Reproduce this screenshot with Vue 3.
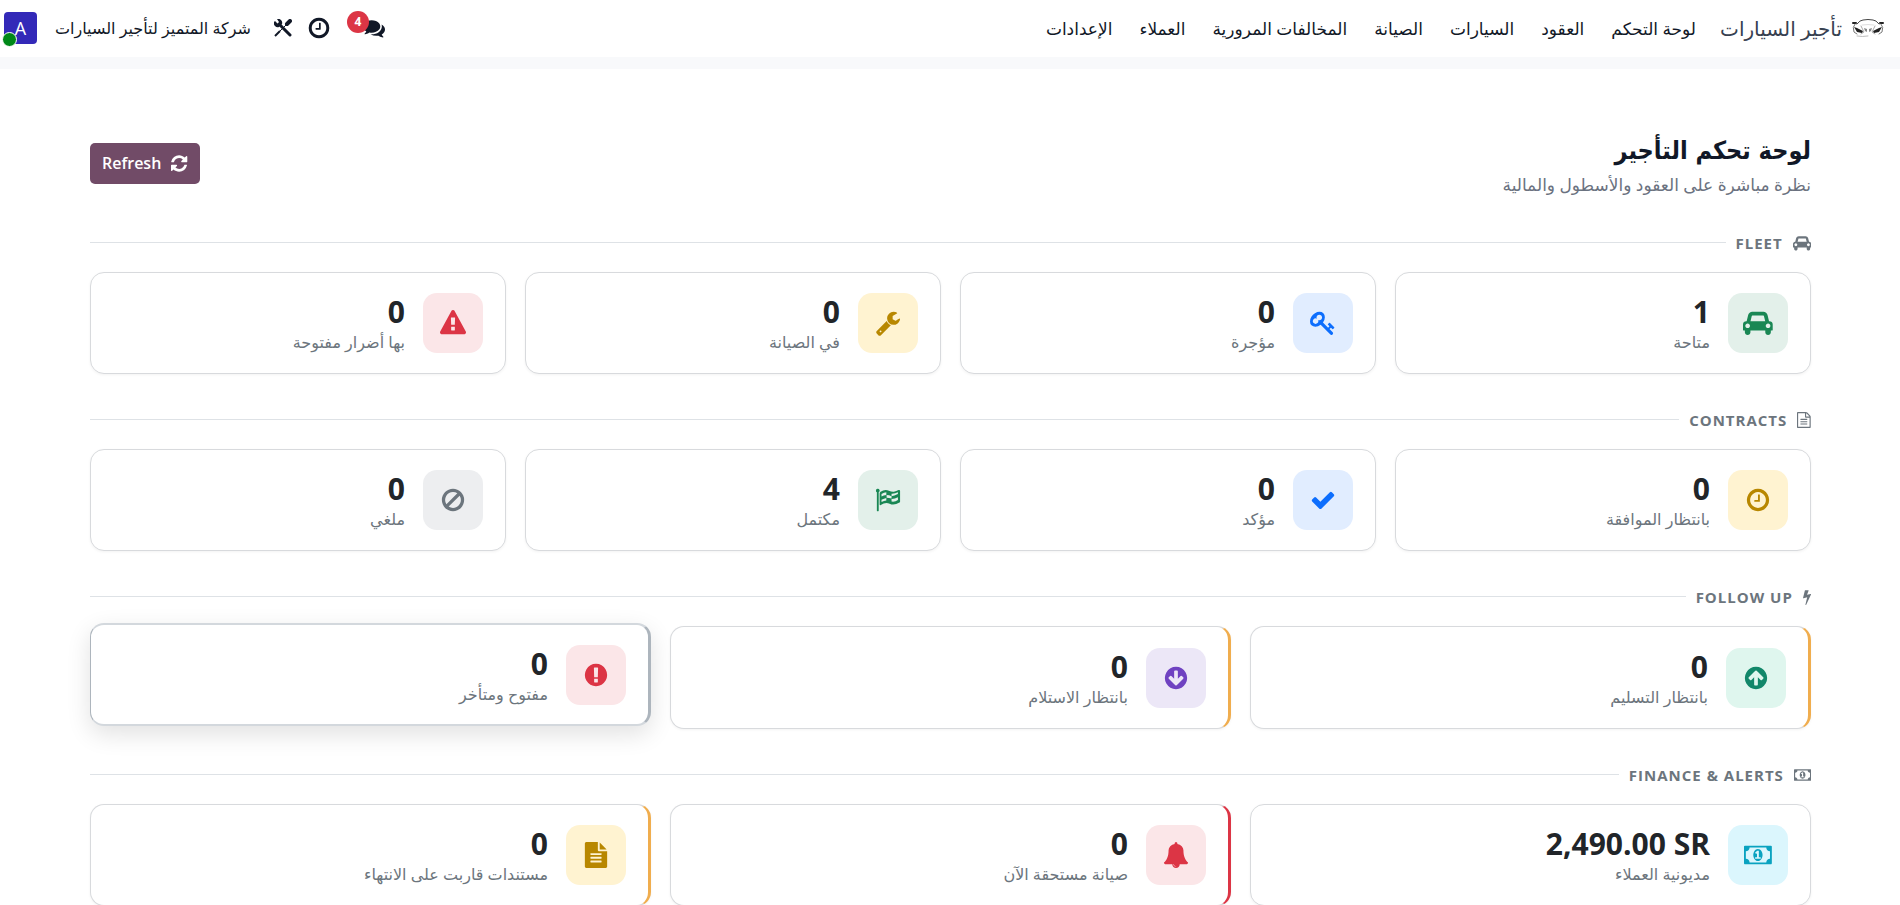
<script setup>
const navItems = ['لوحة التحكم', 'العقود', 'السيارات', 'الصيانة', 'المخالفات المرورية', 'العملاء', 'الإعدادات']

const circle = 'M896 128q209 0 385.5 103t279.5 279.5 103 385.5-103 385.5-279.5 279.5-385.5 103-385.5-103-279.5-279.5-103-385.5 103-385.5 279.5-279.5 385.5-103z'
const arrow = 'M1412 895q0-27-18-45l-362-362-91-91q-18-18-45-18t-45 18l-91 91-362 362q-18 18-18 45t18 45l91 91q18 18 45 18t45-18l189-189v502q0 26 19 45t45 19h128q26 0 45-19t19-45v-502l189 189q19 19 45 19t45-19l91-91q18-18 18-45z'

const icons = {
  car: { w: 2048, d: 'M480 1088q0-66-47-113t-113-47-113 47-47 113 47 113 113 47 113-47 47-113zm36-320h1016l-89-357q-2-8-14-17.5t-21-9.5h-768q-9 0-21 9.5t-14 17.5zm1372 320q0-66-47-113t-113-47-113 47-47 113 47 113 113 47 113-47 47-113zm160-96v384q0 14-9 23t-23 9h-96v128q0 80-56 136t-136 56-136-56-56-136v-128h-1024v128q0 80-56 136t-136 56-136-56-56-136v-128h-96q-14 0-23-9t-9-23v-384q0-93 65.5-158.5t158.5-65.5h28l105-419q23-94 104-157.5t179-63.5h768q98 0 179 63.5t104 157.5l105 419h28q93 0 158.5 65.5t65.5 158.5z' },
  key: { w: 1792, d: 'M832 512q0-80-56-136t-136-56-136 56-56 136q0 42 19 83-41-19-83-19-80 0-136 56t-56 136 56 136 136 56 136-56 56-136q0-42-19-83 41 19 83 19 80 0 136-56t56-136zm851 704q0 17-49 66t-66 49q-9 0-28.5-16t-36.5-33-38.5-40-24.5-26l-96 96 220 220q28 28 28 68 0 42-39 81t-81 39q-40 0-68-28l-671-671q-176 131-365 131-163 0-265.5-102.5t-102.5-265.5q0-160 95-313t248-248 313-95q163 0 265.5 102.5t102.5 265.5q0 189-131 365l355 355 96-96q-3-3-26-24.5t-40-38.5-33-36.5-16-28.5q0-17 49-66t66-49q13 0 23 10 6 6 46 44.5t82 79.5 86.5 86 73 78 28.5 41z' },
  wrench: { w: 1792, d: 'M448 1472q0-26-19-45t-45-19-45 19-19 45 19 45 45 19 45-19 19-45zm644-420l-682 682q-37 37-90 37-52 0-91-37l-106-108q-38-36-38-90 0-53 38-91l681-681q39 98 114.5 173.5t173.5 114.5zm634-435q0 39-23 106-47 134-164.5 217.5t-258.5 83.5q-185 0-316.5-131.5t-131.5-316.5 131.5-316.5 316.5-131.5q58 0 121.5 16.5t107.5 46.5q16 11 16 28t-16 28l-293 169v224l193 107q5-3 79-48.5t135.5-81 70.5-35.5q15 0 23.5 10t8.5 25z' },
  warning: { w: 1792, d: 'M1024 1375v-190q0-14-9.5-23.5t-22.5-9.5h-192q-13 0-22.5 9.5t-9.5 23.5v190q0 14 9.5 23.5t22.5 9.5h192q13 0 22.5-9.5t9.5-23.5zm-2-374l18-459q0-12-10-19-13-11-24-11h-220q-11 0-24 11-10 7-10 21l17 457q0 10 10 16.5t24 6.5h185q14 0 23.5-6.5t10.5-16.5zm-14-934l768 1408q35 63-2 126-17 29-46.5 46t-63.5 17h-1536q-34 0-63.5-17t-46.5-46q-37-63-2-126l768-1408q17-31 47-49t65-18 65 18 47 49z' },
  clock: { w: 1792, d: 'M1024 544v448q0 14-9 23t-23 9h-320q-14 0-23-9t-9-23v-64q0-14 9-23t23-9h224v-352q0-14 9-23t23-9h64q14 0 23 9t9 23zm416 352q0-148-73-273t-198-198-273-73-273 73-198 198-73 273 73 273 198 198 273 73 273-73 198-198 73-273zm224 0q0 209-103 385.5t-279.5 279.5-385.5 103-385.5-103-279.5-279.5-103-385.5 103-385.5 279.5-279.5 385.5-103 385.5 103 279.5 279.5 103 385.5z' },
  check: { w: 1792, d: 'M1671 566q0 40-28 68l-724 724-136 136q-28 28-68 28t-68-28l-136-136-362-362q-28-28-28-68t28-68l136-136q28-28 68-28t68 28l294 295 656-657q28-28 68-28t68 28l136 136q28 28 28 68z' },
  flag: { w: 1792, d: 'M64 256a128 128 0 1 1 192 110v1266q0 32-32 32h-64q-32 0-32-32V366q-64-40-64-110zM384 330Q680 120 960 260Q1140 350 1300 330Q1480 300 1620 215Q1728 170 1728 270V1010Q1728 1050 1690 1075Q1300 1300 1010 1150Q720 1020 400 1235Q320 1280 320 1200V440Q320 370 384 330zM448 480V660Q600 570 780 550V370Q620 390 448 480zM800 550V740Q960 740 1140 800V630Q980 560 800 550zM1140 630Q1320 630 1580 490V370Q1380 470 1140 460zM448 880V1040Q620 950 780 930V750Q620 780 448 880zM1140 820V1000Q1380 1040 1580 900V700Q1380 820 1140 820z' },
  ban: { w: 1792, d: 'M1440 893q0-161-87-295l-754 753q137 89 297 89 111 0 211.5-43.5t173.5-116.5 116-174.5 43-212.5zm-999 299l755-754q-135-91-300-91-148 0-273 73t-198 199-73 274q0 162 89 299zm1223-299q0 157-61 300t-163.5 246-245 164-298.5 61-298.5-61-245-164-163.5-246-61-300 61-299.5 163.5-245.5 245-164 298.5-61 298.5 61 245 164 163.5 245.5 61 299.5z' },
  up: { w: 1792, d: arrow + circle },
  down: { w: 1792, d: arrow + circle, flip: true },
  alert: { w: 1792, d: circle + 'm128 1247v-190q0-14-9-23.5t-22-9.5h-192q-13 0-23 10t-10 23v190q0 13 10 23t23 10h192q13 0 22-9.5t9-23.5zm-2-344l18-621q0-12-10-18-10-8-24-8h-220q-14 0-24 8-10 6-10 18l17 621q0 10 10 17.5t24 7.5h185q14 0 23.5-7.5t10.5-17.5z' },
  money: { w: 1920, d: 'M768 1152h384v-96h-128v-448h-114l-148 137 77 80q42-37 55-57h2v288h-128v96zm512-256q0 70-21 142t-59.5 134-101.5 101-138 39-138-39-101.5-101-59.5-134-21-142 21-142 59.5-134 101.5-101 138-39 138 39 101.5 101 59.5 134 21 142zm512 256v-512q-106 0-181-75t-75-181h-1152q0 106-75 181t-181 75v512q106 0 181 75t75 181h1152q0-106 75-181t181-75zm128-832v1152q0 26-19 45t-45 19h-1792q-26 0-45-19t-19-45v-1152q0-26 19-45t45-19h1792q26 0 45 19t19 45z' },
  bell: { w: 1792, d: 'M912 1696q0-16-16-16-59 0-101.5-42.5t-42.5-101.5q0-16-16-16t-16 16q0 73 51.5 124.5t124.5 51.5q16 0 16-16zm816-288q0 52-38 90t-90 38h-448q0 106-75 181t-181 75-181-75-75-181h-448q-52 0-90-38t-38-90q50-42 91-88t85-119.5 74.5-158.5 50-206 19.5-260q0-152 117-282.5t307-158.5q-8-19-8-39 0-40 28-68t68-28 68 28 28 68q0 20-8 39 190 28 307 158.5t117 282.5q0 139 19.5 260t50 206 74.5 158.5 85 119.5 91 88z' },
  file: { w: 1792, d: 'M1596 476q14 14 28 36h-472v-472q22 14 36 28zm-476 164h544v1056q0 40-28 68t-68 28h-1344q-40 0-68-28t-28-68v-1600q0-40 28-68t68-28h800v544q0 40 28 68t68 28zm160 736v-64q0-14-9-23t-23-9h-704q-14 0-23 9t-9 23v64q0 14 9 23t23 9h704q14 0 23-9t9-23zm0-256v-64q0-14-9-23t-23-9h-704q-14 0-23 9t-9 23v64q0 14 9 23t23 9h704q14 0 23-9t9-23zm0-256v-64q0-14-9-23t-23-9h-704q-14 0-23 9t-9 23v64q0 14 9 23t23 9h704q14 0 23-9t9-23z' },
  fileOutline: { w: 1792, crop: [128, 1536], d: 'M1596 380q28 28 48 76t20 88v1152q0 40-28 68t-68 28h-1344q-40 0-68-28t-28-68v-1600q0-40 28-68t68-28h896q40 0 88 20t76 48zm-444-244v376h376q-10-29-22-41l-313-313q-12-12-41-22zm384 1528v-1024h-416q-40 0-68-28t-28-68v-416h-768v1536h1280zm-1024-864q0-14 9-23t23-9h704q14 0 23 9t9 23v64q0 14-9 23t-23 9h-704q-14 0-23-9t-9-23v-64zm736 224q14 0 23 9t9 23v64q0 14-9 23t-23 9h-704q-14 0-23-9t-9-23v-64q0-14 9-23t23-9h704zm0 256q14 0 23 9t9 23v64q0 14-9 23t-23 9h-704q-14 0-23-9t-9-23v-64q0-14 9-23t23-9h704z' },
  bolt: { w: 1792, crop: [440, 912], d: 'M1333 566q18 20 7 44l-540 1157q-13 25-42 25-4 0-14-2-17-5-25.5-19t-4.5-30l197-808-406 101q-4 1-12 1-18 0-31-11-18-15-13-39l201-825q4-14 16-23t28-9h328q19 0 32 12.5t13 29.5q0 8-5 18l-171 463 396-98q8-2 12-2 19 0 34 15z' },
  refresh: { w: 1792, crop: [128, 1536], d: 'M1639 1056q0 5-1 7-64 268-268 434.5t-478 166.5q-146 0-282.5-55t-243.5-157l-129 129q-19 19-45 19t-45-19-19-45v-448q0-26 19-45t45-19h448q26 0 45 19t19 45-19 45l-137 137q71 66 161 102t187 36q134 0 250-65t186-179q11-17 53-117 8-23 30-23h192q13 0 22.5 9.5t9.5 22.5zm25-800v448q0 26-19 45t-45 19h-448q-26 0-45-19t-19-45 19-45l138-138q-148-137-349-137-134 0-250 65t-186 179q-11 17-53 117-8 23-30 23h-199q-13 0-22.5-9.5t-9.5-22.5v-7q65-268 270-434.5t480-166.5q146 0 284 55.5t245 156.5l130-129q19-19 45-19t45 19 19 45z' },
  comments: { w: 1792, d: 'M1408 768q0 139-94 257t-256.5 186.5-353.5 68.5q-86 0-176-16-124 88-278 128-36 9-86 16h-3q-11 0-20.5-8t-11.5-21q-1-3-1-6.5t.5-6.5 2-6l2.5-5 3.5-5.5 4-5 4.5-5 4-4.5q5-6 23-25t26-29.5 22.5-29 25-38.5 20.5-44q-124-72-195-177t-71-224q0-139 94-257t256.5-186.5 353.5-68.5 353.5 68.5 256.5 186.5 94 257zm384 256q0 120-71 224.5t-195 176.5q10 24 20.5 44t25 38.5 22.5 29 26 29.5 23 25q1 1 4 4.5t4.5 5 4 5 3.5 5.5l2.5 5 2 6 .5 6.5-1 6.5q-3 14-13 22t-22 7q-50-7-86-16-154-40-278-128-90 16-176 16-271 0-472-132 58 4 88 4 161 0 309-45t264-129q125-92 192-212t67-254q0-77-23-152 129 71 204 178t75 230z' },
}

function box(name) {
  const icon = icons[name]
  const [x, w] = icon.crop ?? [0, icon.w]
  return `${x} 0 ${w} 1792`
}

const sections = [
  {
    title: 'FLEET', icon: 'car', columns: 4,
    cards: [
      { value: '1', label: 'متاحة', icon: 'car', tone: 'green' },
      { value: '0', label: 'مؤجرة', icon: 'key', tone: 'blue' },
      { value: '0', label: 'في الصيانة', icon: 'wrench', tone: 'yellow' },
      { value: '0', label: 'بها أضرار مفتوحة', icon: 'warning', tone: 'red' },
    ],
  },
  {
    title: 'CONTRACTS', icon: 'fileOutline', columns: 4,
    cards: [
      { value: '0', label: 'بانتظار الموافقة', icon: 'clock', tone: 'yellow' },
      { value: '0', label: 'مؤكد', icon: 'check', tone: 'blue' },
      { value: '4', label: 'مكتمل', icon: 'flag', tone: 'green' },
      { value: '0', label: 'ملغي', icon: 'ban', tone: 'gray' },
    ],
  },
  {
    title: 'FOLLOW UP', icon: 'bolt', columns: 3,
    cards: [
      { value: '0', label: 'بانتظار التسليم', icon: 'up', tone: 'teal', edge: 'edge-orange' },
      { value: '0', label: 'بانتظار الاستلام', icon: 'down', tone: 'purple', edge: 'edge-orange' },
      { value: '0', label: 'مفتوح ومتأخر', icon: 'alert', tone: 'red', edge: 'raised' },
    ],
  },
  {
    title: 'FINANCE & ALERTS', icon: 'money', columns: 3,
    cards: [
      { value: '2,490.00 SR', label: 'مديونية العملاء', icon: 'money', tone: 'cyan' },
      { value: '0', label: 'صيانة مستحقة الآن', icon: 'bell', tone: 'red', edge: 'edge-red' },
      { value: '0', label: 'مستندات قاربت على الانتهاء', icon: 'file', tone: 'yellow', edge: 'edge-orange' },
    ],
  },
]
</script>

<template>
  <div class="app" dir="rtl" lang="ar">
    <header class="navbar">
      <a class="brand" href="#">
        <svg class="brand-logo" viewBox="0 0 32 18" aria-hidden="true">
          <g fill="none" stroke-linecap="round">
            <path d="M5 5Q8 1 11 1Q16 0 21 1Q24 1 27 5" stroke="#444" />
            <path d="M10 6Q16 5 22 6" stroke="#ddd" />
            <path d="M1 4h3M31 4h-3" stroke="#222" stroke-width="2" />
            <path d="M3 5Q0 8 2 13L5 15M29 5Q32 8 30 13L27 15" stroke="#777" />
            <path d="M9 7L12 13L9 15M23 7L20 13L23 15" stroke="#aaa" />
            <path d="M5 17Q10 18 16 17" stroke="#bbb" />
          </g>
          <path d="M2 8L5 9L11 12L10 14L5 13zM30 8L27 9L21 12L22 14L27 13z" fill="#222" />
          <path d="M12 9L15 10V13L13 12zM20 9L17 10V13L19 12z" fill="#888" />
        </svg>
        <span>تأجير السيارات</span>
      </a>
      <nav class="menu">
        <a v-for="item in navItems" :key="item" href="#">{{ item }}</a>
      </nav>
      <div class="tray">
        <button class="tray-button messages" type="button" aria-label="الرسائل">
          <svg class="icon comments" :viewBox="box('comments')"><path :d="icons.comments.d" /></svg>
          <span class="badge">4</span>
        </button>
        <button class="tray-button" type="button" aria-label="الأنشطة">
          <svg class="icon clock" :viewBox="box('clock')"><path :d="icons.clock.d" /></svg>
        </button>
        <button class="tray-button" type="button" aria-label="الأدوات">
          <svg class="tools" viewBox="0 0 18 18">
            <path d="M5 5L16 16" stroke-width="3" stroke-linecap="round" />
            <path d="M1 2L4 5L5 3L3 0A4 4 0 0 1 8 5L5 8A4 4 0 0 1 0 3z" fill="currentColor" stroke="none" />
            <path d="M16 2L13 5" stroke-width="4" stroke-linecap="round" />
            <path d="M12 6L3 15" stroke-width="1" />
            <path d="M6 12L1 17" stroke-width="2" />
          </svg>
        </button>
        <button class="tray-button company" type="button">شركة المتميز لتأجير السيارات</button>
        <button class="tray-button avatar" type="button" aria-label="الحساب">A<span class="status"></span></button>
      </div>
    </header>

    <main class="dashboard">
      <div class="page-head">
        <div>
          <h1>لوحة تحكم التأجير</h1>
          <p>نظرة مباشرة على العقود والأسطول والمالية</p>
        </div>
        <button class="refresh" type="button">
          <svg class="icon" :viewBox="box('refresh')"><path :d="icons.refresh.d" /></svg>
          <span>Refresh</span>
        </button>
      </div>

      <section v-for="section in sections" :key="section.title" class="section">
        <h2>
          <svg class="icon" :viewBox="box(section.icon)"><path :d="icons[section.icon].d" /></svg>
          <span dir="ltr">{{ section.title }}</span>
        </h2>
        <div class="cards" :class="'columns-' + section.columns">
          <a v-for="card in section.cards" :key="card.label" href="#" class="card" :class="card.edge">
            <span class="tile" :class="card.tone">
              <svg class="icon" :class="{ flip: icons[card.icon].flip }" :viewBox="box(card.icon)"><path fill-rule="evenodd" :d="icons[card.icon].d" /></svg>
            </span>
            <span class="info">
              <strong dir="ltr">{{ card.value }}</strong>
              <span class="label">{{ card.label }}</span>
            </span>
          </a>
        </div>
      </section>
    </main>
  </div>
</template>

<style>
body {
  margin: 0;
  background: #fff;
}
</style>

<style scoped>
.app {
  font-family: "Segoe UI", "Open Sans", "Noto Sans", "DejaVu Sans", sans-serif;
  font-size: 16px;
  color: #111827;
}
.app *,
.app {
  box-sizing: border-box;
}
a {
  color: inherit;
  text-decoration: none;
}
button {
  font: inherit;
  color: inherit;
  border: 0;
  background: none;
  padding: 0;
  cursor: pointer;
}
.icon {
  display: block;
  fill: currentColor;
  flex: none;
}
.navbar {
  display: flex;
  align-items: center;
  height: 69px;
  padding: 0 16px 1px 4px;
  border-bottom: 12px solid #f8f9fb;
  white-space: nowrap;
}
.brand {
  display: flex;
  align-items: center;
  gap: 10px;
  font-size: 20px;
  color: #374151;
}
.brand-logo {
  width: 32px;
  height: 18px;
}
.menu {
  display: flex;
  gap: 27px;
  margin-right: 24px;
  font-size: 17px;
}
.tray {
  display: flex;
  align-items: center;
  margin-right: auto;
}
.tray-button {
  position: relative;
}
.messages {
  width: 22px;
  margin-left: 32px;
}
.comments {
  height: 22px;
}
.badge {
  position: absolute;
  right: 16px;
  top: -6px;
  width: 22px;
  height: 22px;
  border-radius: 50%;
  background: #dc3545;
  color: #fff;
  font-size: 12px;
  font-weight: 700;
  line-height: 22px;
  text-align: center;
}
.clock {
  height: 24px;
  margin-left: 15px;
}
.tools {
  display: block;
  width: 18px;
  height: 18px;
  margin-left: 23px;
  fill: none;
  stroke: currentColor;
}
.avatar {
  width: 33px;
  height: 32px;
  margin-right: 18px;
  border-radius: 4px;
  background: #3329b8;
  color: #fff;
  font-size: 18px;
  line-height: 32px;
}
.status {
  position: absolute;
  left: -2px;
  bottom: -3px;
  width: 15px;
  height: 15px;
  border: 1px solid #fff;
  border-radius: 50%;
  background: #008818;
}
.dashboard {
  padding: 60px 89px 24px 90px;
}
.page-head {
  display: flex;
  align-items: center;
  justify-content: space-between;
  margin-bottom: 35px;
}
h1 {
  margin: 0;
  font-family: "DejaVu Sans Condensed", "DejaVu Sans", sans-serif;
  font-size: 25px;
  line-height: 44px;
  font-weight: 700;
}
p {
  margin: 0;
  font-size: 17px;
  line-height: 24px;
  color: #6b7280;
}
.refresh {
  display: flex;
  align-items: center;
  gap: 10px;
  height: 41px;
  padding: 0 12px;
  border-radius: 5px;
  background: #714b67;
  color: #fff;
  font-size: 16px;
  font-weight: 600;
}
.refresh .icon {
  height: 19px;
}
.section {
  margin-bottom: 35px;
}
h2 {
  display: flex;
  align-items: center;
  gap: 10px;
  height: 21px;
  margin: 0 0 19px;
  font-size: 15px;
  font-weight: 700;
  letter-spacing: 1px;
  color: #6c757d;
}
h2::after {
  content: "";
  flex: 1;
  height: 1px;
  background: #dee2e6;
}
h2 .icon {
  height: 16px;
}
.cards {
  display: grid;
  gap: 19px;
}
.columns-4 {
  grid-template-columns: repeat(4, 1fr);
}
.columns-3 {
  grid-template-columns: repeat(3, 1fr);
}
.card {
  display: flex;
  align-items: center;
  gap: 18px;
  padding: 20px 22px;
  border: 1px solid #d8dadd;
  border-radius: 14px;
  background: #fff;
  box-shadow: 0 1px 3px rgba(0, 0, 0, 0.05);
}
.edge-orange {
  border-right: 3px solid #f0ad4e;
}
.edge-red {
  border-right: 3px solid #dc3545;
}
.raised {
  padding: 20px 22px 19px;
  border-color: #d3d8dd #adb5bd;
  border-width: 2px 3px 2px 1px;
  box-shadow: 0 8px 24px rgba(0, 0, 0, 0.12);
  transform: translateY(-3px);
}
.tile {
  display: flex;
  align-items: center;
  justify-content: center;
  width: 60px;
  height: 60px;
  border-radius: 14px;
  flex: none;
}
.tile .icon {
  height: 26px;
}
.flip {
  transform: rotate(180deg);
}
.green { background: #e3f0ea; color: #198754; }
.blue { background: #e1edff; color: #0d6efd; }
.yellow { background: #fff3d1; color: #b88700; }
.red { background: #fbe6e8; color: #dc3545; }
.gray { background: #edeef0; color: #6c757d; }
.teal { background: #dff6ee; color: #12876a; }
.purple { background: #ece7f7; color: #6f42c1; }
.cyan { background: #dbf6fd; color: #0aa2c0; }
.info {
  display: flex;
  flex-direction: column;
  align-items: flex-start;
}
strong {
  font-size: 30px;
  line-height: 38px;
  color: #212529;
}
.label {
  font-size: 16px;
  line-height: 22px;
  color: #6c757d;
}
</style>
